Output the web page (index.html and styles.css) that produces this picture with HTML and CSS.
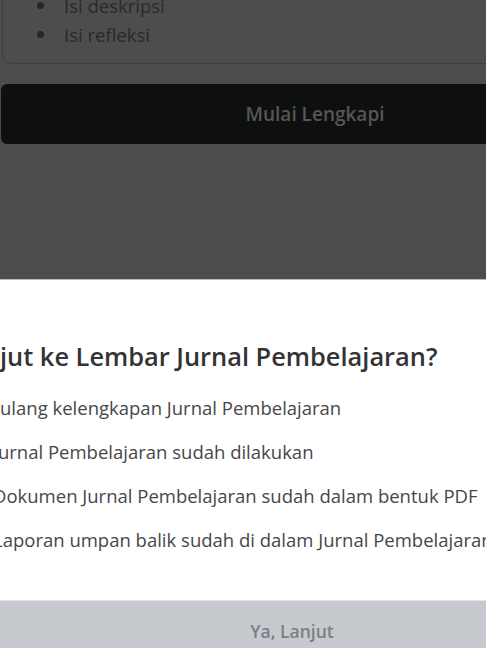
FILE: index.html
```html
<!DOCTYPE html>
<html lang="id">
<head>
<meta charset="utf-8">
<title>Jurnal Pembelajaran</title>
<link rel="stylesheet" href="styles.css">
</head>
<body>
  <main class="page">
    <section class="card">
      <ul class="card-list">
        <li>Isi deskripsi</li>
        <li>Isi refleksi</li>
      </ul>
    </section>
    <button class="btn-start" type="button">Mulai Lengkapi</button>
  </main>

  <div class="sheet" role="dialog">
    <div class="sheet-body">
      <h2 class="sheet-title">jut ke Lembar Jurnal Pembelajaran?</h2>
      <p class="sheet-lead">ulang kelengkapan Jurnal Pembelajaran</p>
      <ul class="checklist">
        <li>Jurnal Pembelajaran sudah dilakukan</li>
        <li>Dokumen Jurnal Pembelajaran sudah dalam bentuk PDF</li>
        <li>Laporan umpan balik sudah di dalam Jurnal Pembelajaran</li>
      </ul>
    </div>
    <button class="btn-confirm" type="button">Ya, Lanjut</button>
  </div>
</body>
</html>
```

FILE: styles.css
```css
html, body {
  margin: 0;
  padding: 0;
}

body {
  position: relative;
  width: 486px;
  height: 648px;
  overflow: hidden;
  background: #4c4c4c;
  font-family: "Open Sans", "Noto Sans", sans-serif;
}

/* page content, dimmed behind the sheet */
.page {
  width: 630px;
  padding-left: 1px;
}

.card {
  margin: -30px 0 0 1px;
  padding: 21px 0 14px;
  background: #4d4d4d;
  border: 1px solid #3d3d3d;
  border-top: none;
  border-radius: 0 0 10px 10px;
}

.card-list {
  margin: 0;
  padding: 0 0 0 34px;
  list-style: none;
  color: #2a2a2a;
  font-size: 18.5px;
  line-height: 29px;
}

.card-list li {
  display: flex;
  align-items: center;
}

.card-list li::before {
  content: "";
  flex: none;
  width: 7px;
  height: 7px;
  margin-right: 20px;
  border-radius: 50%;
  background: #262626;
}

.btn-start {
  display: block;
  width: 628px;
  height: 60px;
  margin-top: 20px;
  padding: 0;
  border: none;
  border-radius: 6px;
  background: #0e1010;
  color: #555657;
  font-family: inherit;
  font-size: 19px;
  font-weight: 600;
}

/* bottom sheet */
.sheet {
  position: absolute;
  top: 279px;
  left: 0;
  right: 0;
  bottom: 0;
  background: #ffffff;
  border-top: 1px solid #b9b9b9;
}

.sheet-body {
  padding-top: 58px;
}

.sheet-title {
  margin: 0 0 12px;
  color: #333333;
  font-size: 25.4px;
  font-weight: 600;
  line-height: 36px;
  white-space: nowrap;
}

.sheet-lead {
  margin: 0;
  color: #474747;
  font-size: 18.5px;
  line-height: 44px;
  white-space: nowrap;
}

.checklist {
  margin: 0 0 0 -7px;
  padding: 0;
  list-style: none;
  color: #474747;
  font-size: 18.5px;
  line-height: 44px;
  white-space: nowrap;
}

.btn-confirm {
  position: absolute;
  top: 320px;
  left: 0;
  width: 584px;
  height: 60px;
  padding: 0;
  border: none;
  border-top: 1px solid #e2e3e5;
  background: #c6c9ce;
  color: #7b7f85;
  font-family: inherit;
  font-size: 17.5px;
  font-weight: 600;
}
```
